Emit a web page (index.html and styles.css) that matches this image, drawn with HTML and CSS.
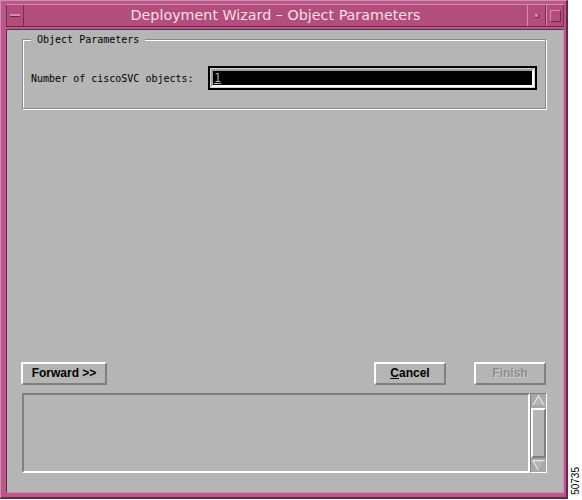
FILE: index.html
```html
<!DOCTYPE html>
<html>
<head>
<link rel="stylesheet" href="styles.css">
</head>
<body>

<div class="page">
  <div class="window">
    <div class="titlebar">
      <div class="tb_btn menu_btn"><span class="menu_bar"></span></div>
      <div class="title">Deployment Wizard &ndash; Object Parameters</div>
      <div class="tb_btn min_btn"><span class="min_dot"></span></div>
      <div class="tb_btn max_btn"><span class="max_box"></span></div>
    </div>

    <div class="content">
      <div class="group">
        <div class="legend">Object Parameters</div>
        <div class="row">
          <span class="label">Number of ciscoSVC objects:</span>
          <div class="field"><div class="field_in"><span class="caret">1</span></div></div>
        </div>
      </div>

      <div class="spacer"></div>

      <div class="buttons">
        <div class="btn forward">Forward &gt;&gt;</div>
        <div class="btn cancel"><u>C</u>ancel</div>
        <div class="btn finish">Finish</div>
      </div>

      <div class="log_row">
        <div class="log"></div>
        <div class="scroll">
          <svg class="arrow" width="17" height="13" viewBox="0 0 17 13">
            <polygon points="8.5,1 15,12 2,12" fill="#b5b5b5" stroke="#ffffff" stroke-width="1"/>
            <polyline points="15,12 2,12" fill="none" stroke="#8a8a8a" stroke-width="1"/>
          </svg>
          <div class="thumb"></div>
          <svg class="arrow" width="17" height="13" viewBox="0 0 17 13">
            <polygon points="2,1 15,1 8.5,12" fill="#b5b5b5" stroke="#ffffff" stroke-width="1"/>
            <polyline points="15,1 8.5,12" fill="none" stroke="#8a8a8a" stroke-width="1"/>
          </svg>
        </div>
      </div>
    </div>
  </div>

  <div class="side">
    <div class="stamp">50735</div>
  </div>
</div>

</body>
</html>
```

FILE: styles.css
```css
body {
  margin: 0;
  background-color: white;
  font-family: "DejaVu Sans Mono", monospace;
}

.page {
  display: flex;
  width: 582px;
  height: 500px;
}

.window {
  width: 568px;
  height: 499px;
  box-sizing: border-box;
  background-color: #b9588a;
  border-top: 1px solid #d58cb0;
  border-left: 1px solid #d58cb0;
  border-right: 2px solid #6b2648;
  border-bottom: 2px solid #6b2648;
  padding: 3px 2px 4px 5px;
  display: flex;
  flex-direction: column;
}

.titlebar {
  height: 21px;
  display: flex;
  background-color: #b34e7c;
  border-top: 1px solid #d58cb0;
  border-bottom: 1px solid #6b2648;
}

.tb_btn {
  width: 18px;
  box-sizing: border-box;
  border-left: 1px solid #d58cb0;
  border-right: 1px solid #7a2c50;
  display: flex;
  align-items: center;
  justify-content: center;
}

.menu_btn {
  border-left: 1px solid #7a2c50;
}

.menu_bar {
  width: 10px;
  height: 2px;
  background-color: #d58cb0;
  border-bottom: 1px solid #6b2648;
}

.min_btn {
  width: 19px;
}

.min_dot {
  width: 3px;
  height: 3px;
  background-color: #d58cb0;
  border-right: 1px solid #6b2648;
  border-bottom: 1px solid #6b2648;
}

.max_box {
  width: 9px;
  height: 10px;
  border: 1px solid #d58cb0;
  border-right-color: #6b2648;
  border-bottom-color: #6b2648;
}

.title {
  flex: 1;
  color: #f4dde8;
  font-family: "DejaVu Sans", sans-serif;
  font-size: 14.3px;
  text-align: center;
  line-height: 20px;
}

.content {
  flex: 1;
  margin-top: 2px;
  background-color: #b5b5b5;
  border-top: 1px solid #6b2648;
  border-left: 1px solid #6b2648;
  border-right: 1px solid #d58cb0;
  border-bottom: 1px solid #d58cb0;
  padding: 9px 16px 19px 15px;
  display: flex;
  flex-direction: column;
  font-size: 10px;
  color: black;
}

.group {
  position: relative;
  height: 68px;
  border: 1px solid #888888;
  box-shadow: inset 1px 1px 0 #ffffff, 1px 1px 0 #ffffff;
  margin-right: 1px;
}

.legend {
  position: absolute;
  top: -7px;
  left: 8px;
  padding: 0 6px;
  background-color: #b5b5b5;
  line-height: 13px;
}

.row {
  display: flex;
  align-items: center;
  margin-top: 26px;
  padding-left: 8px;
}

.label {
  width: 177px;
}

.field {
  width: 329px;
  height: 24px;
  box-sizing: border-box;
  border: 2px solid black;
  padding: 1px;
  background-color: #d0d0d0;
}

.field_in {
  height: 100%;
  box-sizing: border-box;
  background-color: black;
  border-top: 2px solid #a0a0a0;
  border-left: 2px solid #a0a0a0;
  border-right: 2px solid #ffffff;
  border-bottom: 2px solid #ffffff;
  padding-left: 1px;
  line-height: 14px;
  font-size: 12px;
}

.caret {
  color: #a8a8a8;
  text-decoration: underline;
}

.spacer {
  flex: 1;
}

.buttons {
  display: flex;
  font-family: "Liberation Sans", sans-serif;
  font-weight: bold;
  font-size: 12px;
}

.btn {
  height: 23px;
  box-sizing: border-box;
  border: 2px solid;
  border-color: #ffffff #808080 #808080 #ffffff;
  background-color: #b5b5b5;
  text-align: center;
  line-height: 19px;
}

.forward {
  width: 86px;
  margin-left: -1px;
}

.cancel {
  width: 72px;
  margin-left: auto;
}

.finish {
  width: 72px;
  margin-left: 28px;
  margin-right: 1px;
  color: #8e8e8e;
  text-shadow: 1px 1px 0 #cfcfcf;
}

.log_row {
  display: flex;
  margin-top: 8px;
  height: 80px;
}

.log {
  flex: 1;
  box-sizing: border-box;
  border: 2px solid;
  border-color: #808080 #ffffff #ffffff #808080;
}

.scroll {
  width: 17px;
  box-sizing: border-box;
  border: 1px solid;
  border-color: #808080 #ffffff #ffffff #808080;
  display: flex;
  flex-direction: column;
  background-color: #a8a8a8;
}

.arrow {
  display: block;
  width: 15px;
}

.thumb {
  flex: 1;
  margin: 1px 0;
  border: 2px solid;
  border-color: #ffffff #808080 #808080 #ffffff;
  background-color: #b5b5b5;
}

.side {
  flex: 1;
  display: flex;
  align-items: flex-end;
  justify-content: center;
  padding-bottom: 5px;
}

.stamp {
  writing-mode: vertical-rl;
  transform: rotate(180deg);
  font-family: "Liberation Sans", sans-serif;
  font-size: 10px;
  color: black;
}
```
